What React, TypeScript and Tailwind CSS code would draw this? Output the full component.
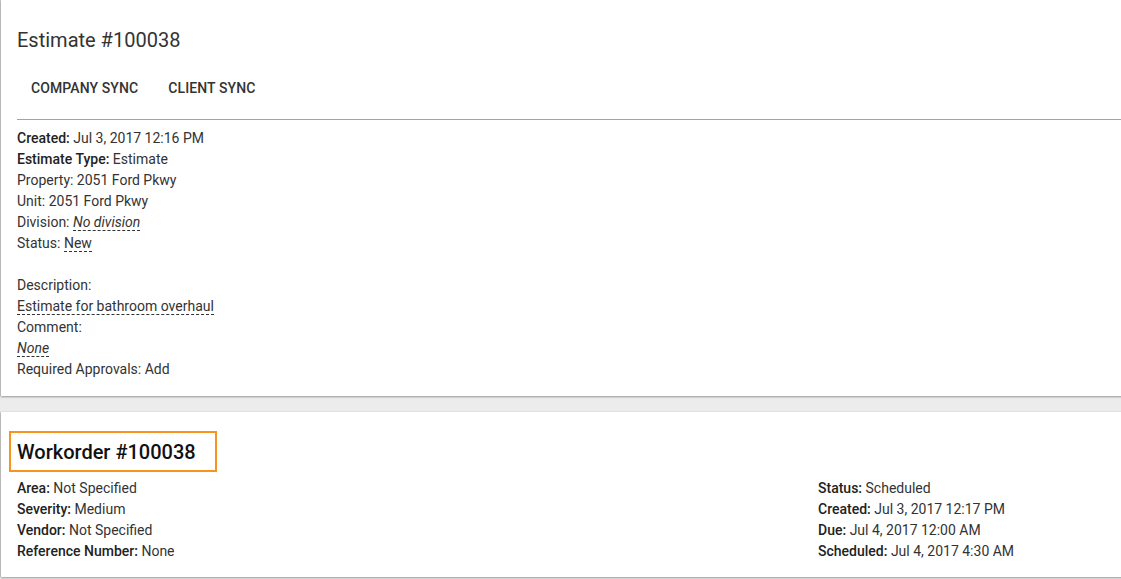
import React from 'react'

const font = { fontFamily: 'Roboto, "Noto Sans", sans-serif' }

function Row({ label, children }: { label: string; children: React.ReactNode }) {
  return (
    <div className="h-[21px] leading-[21px] text-[14px] text-[#333]">
      <span className="font-medium text-[#222]">{label}:</span> {children}
    </div>
  )
}

function Line({ children }: { children: React.ReactNode }) {
  return <div className="h-[21px] leading-[21px] text-[14px] text-[#333]">{children}</div>
}

function Dashed({ children, italic }: { children: React.ReactNode; italic?: boolean }) {
  return (
    <span className={`border-b border-dashed border-[#333] ${italic ? 'italic' : ''}`}>{children}</span>
  )
}

export default function App() {
  return (
    <div className="w-[1121px] h-[579px] overflow-hidden bg-[#ececec]" style={font}>
      {/* Estimate card */}
      <div className="ml-px mr-[-10px] bg-white h-[396px] shadow-[0_1px_2px_rgba(0,0,0,0.35),-1px_0_1px_rgba(0,0,0,0.12)] pl-4 pt-[28px]">
        <h1 className="text-[20px] leading-[24px] font-normal text-[#333]">Estimate #100038</h1>
        <div className="flex mt-[20px] h-[32px] items-center">
          <div className="pl-[14px] pr-[16px] text-[14px] font-medium text-[#333] tracking-[0.1px]">COMPANY SYNC</div>
          <div className="px-[14px] text-[14px] font-medium text-[#333] tracking-[0.1px]">CLIENT SYNC</div>
        </div>
        <div className="mt-[15px] h-px bg-[#a3a3a3]" />
        <div className="pt-[8px]">
          <Row label="Created">Jul 3, 2017 12:16 PM</Row>
          <Row label="Estimate Type">Estimate</Row>
          <Line>Property: 2051 Ford Pkwy</Line>
          <Line>Unit: 2051 Ford Pkwy</Line>
          <Line>
            Division: <Dashed italic>No division</Dashed>
          </Line>
          <Line>
            Status: <Dashed>New</Dashed>
          </Line>
          <div className="h-[21px]" />
          <Line>Description:</Line>
          <Line>
            <Dashed>Estimate for bathroom overhaul</Dashed>
          </Line>
          <Line>Comment:</Line>
          <Line>
            <Dashed italic>None</Dashed>
          </Line>
          <Line>Required Approvals: Add</Line>
        </div>
      </div>

      {/* Workorder card */}
      <div className="mt-[16px] ml-px mr-[-10px] bg-white h-[165px] shadow-[0_1px_2px_rgba(0,0,0,0.35),-1px_0_1px_rgba(0,0,0,0.12)] pl-4 pt-[19px]">
        <div className="inline-block -ml-[8px] border-2 border-[#f7931e] pl-[6px] pr-[19px] pt-[1px] h-[41px] leading-[37px]">
          <h2 className="text-[20px] font-medium text-[#111]">Workorder #100038</h2>
        </div>
        <div className="flex pt-[6px]">
          <div className="w-[801px]">
            <Row label="Area">Not Specified</Row>
            <Row label="Severity">Medium</Row>
            <Row label="Vendor">Not Specified</Row>
            <Row label="Reference Number">None</Row>
          </div>
          <div>
            <Row label="Status">Scheduled</Row>
            <Row label="Created">Jul 3, 2017 12:17 PM</Row>
            <Row label="Due">Jul 4, 2017 12:00 AM</Row>
            <Row label="Scheduled">Jul 4, 2017 4:30 AM</Row>
          </div>
        </div>
      </div>
    </div>
  )
}
